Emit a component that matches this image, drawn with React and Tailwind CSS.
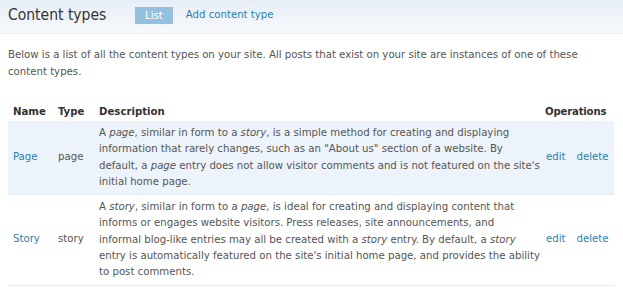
const rows = [
  {
    name: "Page",
    type: "page",
    bg: "bg-[#edf3fa]",
    lines: [
      <>A <em>page</em>, similar in form to a <em>story</em>, is a simple method for creating and displaying</>,
      <>information that rarely changes, such as an "About us" section of a website. By</>,
      <>default, a <em>page</em> entry does not allow visitor comments and is not featured on the site's</>,
      <>initial home page.</>,
    ],
  },
  {
    name: "Story",
    type: "story",
    bg: "bg-white",
    lines: [
      <>A <em>story</em>, similar in form to a <em>page</em>, is ideal for creating and displaying content that</>,
      <>informs or engages website visitors. Press releases, site announcements, and</>,
      <>informal blog-like entries may all be created with a <em>story</em> entry. By default, a <em>story</em></>,
      <>entry is automatically featured on the site's initial home page, and provides the ability</>,
      <>to post comments.</>,
    ],
  },
];

export default function App() {
  return (
    <div className="w-[623px] h-[292px] overflow-hidden bg-white text-[#555] font-['DejaVu_Sans_Condensed','DejaVu_Sans',sans-serif] text-[11.3px]">
      <div className="h-[34px] bg-gradient-to-b from-[#e7eef7] to-[#f7f9fc] border-b border-[#eef2f7] flex items-center px-2">
        <h1 className="text-[15.5px] font-normal text-[#333] w-[127px] -mt-[2px]">Content types</h1>
        <span className="bg-[#93c1df] text-white px-[10px] h-[17px] leading-[17px] -mt-[2px]">List</span>
        <a className="ml-[13px] text-[#2f7fae] -mt-[2px]">Add content type</a>
      </div>

      <p className="px-2 mt-[12px] leading-[17px]">
        Below is a list of all the content types on your site. All posts that exist on your site are instances of one of these
        <br />
        content types.
      </p>

      <table className="ml-2 mt-[24px] w-[606px] table-fixed border-collapse">
        <thead>
          <tr className="text-left text-[#333] font-bold">
            <th className="w-[46px] pl-[5px] leading-[16px]">Name</th>
            <th className="w-[41px] pl-[4px]">Type</th>
            <th className="w-[445px] pl-[4px]">Description</th>
            <th className="pl-[5px] tracking-[-0.2px]">Operations</th>
          </tr>
        </thead>
        <tbody>
          {rows.map(r => (
            <tr key={r.name} className={`${r.bg} border-b border-[#e3ebf4]`}>
              <td className="pl-[5px] text-[#2f7fae]">{r.name}</td>
              <td className="pl-[4px]">{r.type}</td>
              <td className="pl-[4px] py-[4px] leading-[16.3px]">
                {r.lines.map((l, i) => (
                  <div key={i} className="whitespace-nowrap">{l}</div>
                ))}
              </td>
              <td className="pl-[6px] text-[#2f7fae] whitespace-nowrap">
                <a>edit</a>
                <a className="ml-[11px]">delete</a>
              </td>
            </tr>
          ))}
        </tbody>
      </table>
    </div>
  );
}
